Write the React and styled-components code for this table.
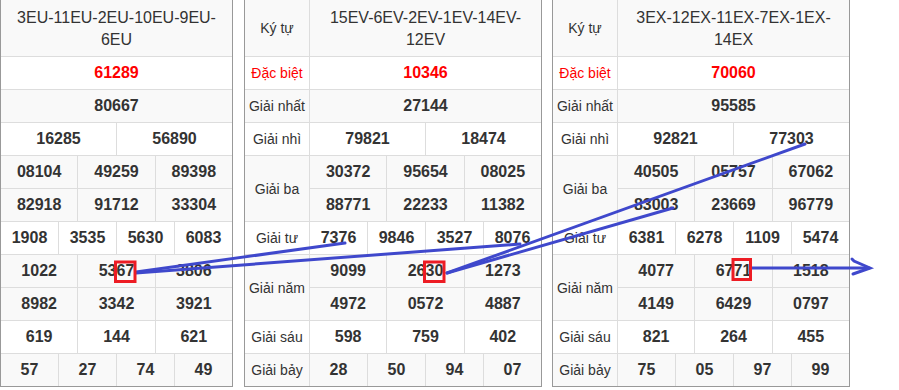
import React from "react";
import styled, {createGlobalStyle} from "styled-components";

const GlobalStyle = createGlobalStyle`
    body {
        margin: 0;
        background: #fff;
        font-family: "Liberation Sans", Arial, sans-serif;
        color: #333;
    }
`;

const Page = styled.div`
    position: relative;
    display: flex;
    align-items: flex-start;
    width: 899px;
    height: 390px;
    overflow: hidden;
`;

const Table = styled.div`
    width: ${(p) => p.$width}px;
    margin-left: ${(p) => p.$offset || 0}px;
    box-sizing: border-box;
    border: 1px solid #999;
    border-top: none;
`;

const HeaderRow = styled.div`
    display: flex;
    height: 56px;
    background: #f9f9f9;
`;

const Row = styled.div`
    display: flex;
    border-top: 1px solid #ddd;
    background: ${(p) => (p.$alt ? "#f9f9f9" : "#fff")};
`;

const SubRows = styled.div`
    flex: 1;
    display: flex;
    flex-direction: column;
`;

const SubRow = styled.div`
    display: flex;
    height: 32px;

    & + & {
        border-top: 1px solid #ddd;
    }
`;

const Label = styled.div`
    width: 64px;
    flex: none;
    border-right: 1px solid #ddd;
    display: flex;
    align-items: center;
    justify-content: center;
    text-align: center;
    font-size: 14px;
    color: ${(p) => (p.$red ? "#f00" : "#333")};
`;

const Title = styled.div`
    flex: 1;
    display: flex;
    align-items: center;
    justify-content: center;
    text-align: center;
    font-size: 16px;
    line-height: 22px;
    padding-top: 1px;
`;

const Cell = styled.div`
    flex: 1;
    height: 32px;
    display: flex;
    align-items: center;
    justify-content: center;
    font-size: 16px;
    font-weight: bold;
    color: ${(p) => (p.$red ? "#f00" : "#333")};

    & + & {
        border-left: 1px solid #ddd;
    }
`;

const Overlay = styled.svg`
    position: absolute;
    left: 0;
    top: 0;
    pointer-events: none;
`;

const ROWS = [
    {key: "db", label: "Đặc biệt", red: true},
    {key: "nhat", label: "Giải nhất"},
    {key: "nhi", label: "Giải nhì"},
    {key: "ba", label: "Giải ba"},
    {key: "tu", label: "Giải tư"},
    {key: "nam", label: "Giải năm"},
    {key: "sau", label: "Giải sáu"},
    {key: "bay", label: "Giải bảy"},
];

const tables = [
    {
        title: ["3EU-11EU-2EU-10EU-9EU-", "6EU"],
        labels: false,
        db: [["61289"]],
        nhat: [["80667"]],
        nhi: [["16285", "56890"]],
        ba: [["08104", "49259", "89398"], ["82918", "91712", "33304"]],
        tu: [["1908", "3535", "5630", "6083"]],
        nam: [["1022", "5367", "3806"], ["8982", "3342", "3921"]],
        sau: [["619", "144", "621"]],
        bay: [["57", "27", "74", "49"]],
    },
    {
        title: ["15EV-6EV-2EV-1EV-14EV-", "12EV"],
        labels: true,
        db: [["10346"]],
        nhat: [["27144"]],
        nhi: [["79821", "18474"]],
        ba: [["30372", "95654", "08025"], ["88771", "22233", "11382"]],
        tu: [["7376", "9846", "3527", "8076"]],
        nam: [["9099", "2630", "1273"], ["4972", "0572", "4887"]],
        sau: [["598", "759", "402"]],
        bay: [["28", "50", "94", "07"]],
    },
    {
        title: ["3EX-12EX-11EX-7EX-1EX-", "14EX"],
        labels: true,
        db: [["70060"]],
        nhat: [["95585"]],
        nhi: [["92821", "77303"]],
        ba: [["40505", "05757", "67062"], ["83003", "23669", "96779"]],
        tu: [["6381", "6278", "1109", "5474"]],
        nam: [["4077", "6771", "1518"], ["4149", "6429", "0797"]],
        sau: [["821", "264", "455"]],
        bay: [["75", "05", "97", "99"]],
    },
];

function ResultTable({data, width, offset}) {
    return (
        <Table $width={width} $offset={offset}>
            <HeaderRow>
                {data.labels && <Label>Ký tự</Label>}
                <Title>
                    {data.title[0]}
                    <br/>
                    {data.title[1]}
                </Title>
            </HeaderRow>
            {ROWS.map((row, i) => (
                <Row key={row.key} $alt={i % 2 === 1}>
                    {data.labels && <Label $red={row.red}>{row.label}</Label>}
                    <SubRows>
                        {data[row.key].map((line, j) => (
                            <SubRow key={j}>
                                {line.map((num, k) => (
                                    <Cell key={k} $red={row.red}>{num}</Cell>
                                ))}
                            </SubRow>
                        ))}
                    </SubRows>
                </Row>
            ))}
        </Table>
    );
}

// cac duong noi giua cac so trung
function Links() {
    const blue = "#3f48cc";
    const red = "#ed1c24";
    return (
        <Overlay width="899" height="390" viewBox="0 0 899 390">
            <g stroke={blue} strokeWidth="3" strokeLinecap="round" fill="none">
                <line x1="136" y1="272" x2="345" y2="243"/>
                <line x1="136" y1="273" x2="520" y2="244"/>
                <line x1="447" y1="273" x2="805" y2="144"/>
                <line x1="447" y1="273" x2="673" y2="208"/>
                <line x1="752" y1="268" x2="869" y2="268"/>
                <polyline points="852,259 854,261 870,268 853,274"/>
            </g>
            <g stroke={red} strokeWidth="3" fill="none">
                <rect x="115.5" y="262" width="19.5" height="19.5"/>
                <rect x="424.5" y="262" width="19.5" height="19.5"/>
                <rect x="733" y="259.5" width="17.5" height="20"/>
            </g>
        </Overlay>
    );
}

export default function App() {
    return (
        <>
            <GlobalStyle/>
            <Page>
                <ResultTable data={tables[0]} width={233}/>
                <ResultTable data={tables[1]} width={298} offset={11}/>
                <ResultTable data={tables[2]} width={298} offset={10}/>
                <Links/>
            </Page>
        </>
    );
}
